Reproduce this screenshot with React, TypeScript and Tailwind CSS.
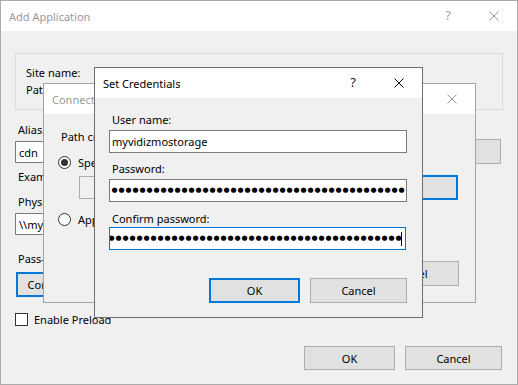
import React from "react";

const XIcon = ({ color }: { color: string }) => (
  <svg width="10" height="10" viewBox="0 0 10 10" className="block">
    <path d="M0.5 0.5 L9.5 9.5 M9.5 0.5 L0.5 9.5" stroke={color} strokeWidth="1" fill="none" />
  </svg>
);

function TitleBar({ title, active, help = true }: { title: string; active: boolean; help?: boolean }) {
  const c = active ? "#000000" : "#999999";
  return (
    <div className="h-[30px] bg-white flex items-center flex-none">
      <span className={active ? "pl-[8px] leading-[15px] text-black" : "pl-[8px] leading-[15px] text-[#999999]"}>{title}</span>
      <div className="ml-auto flex h-full">
        {help && (
          <div className={active ? "w-[46px] h-full flex items-center justify-center text-[13px] text-[#222222]" : "w-[46px] h-full flex items-center justify-center text-[13px] text-[#a6a6a6]"}>
            ?
          </div>
        )}
        <div className="w-[46px] h-full flex items-center justify-center">
          <XIcon color={c} />
        </div>
      </div>
    </div>
  );
}

function Radio({ checked = false }: { checked?: boolean }) {
  return (
    <div className="w-[13px] h-[13px] flex-none rounded-full border border-[#333333] bg-white flex items-center justify-center">
      {checked && <div className="w-[7px] h-[7px] rounded-full bg-[#333333]" />}
    </div>
  );
}

function Dots({ n }: { n: number }) {
  const arr = Array.from({ length: n });
  return (
    <>
      {arr.map((_, i) => (
        <span key={i} className="w-[7px] flex-none text-center font-['DejaVu_Sans',sans-serif] text-[7px] leading-none text-black">
          ●
        </span>
      ))}
    </>
  );
}

function Btn({ children, w, primary = false }: { children: React.ReactNode; w: string; primary?: boolean }) {
  return (
    <div
      className={
        primary
          ? `${w} flex-none h-full border-2 border-[#0078d7] bg-[#e1e1e1] flex items-center justify-center leading-none`
          : `${w} flex-none h-full border border-[#adadad] bg-[#e1e1e1] flex items-center justify-center leading-none`
      }
    >
      {children}
    </div>
  );
}

export default function App() {
  return (
    <div className="w-[518px] h-[385px] relative border border-[#aaaaaa] bg-[#f0f0f0] flex flex-col overflow-hidden font-['Noto_Sans',sans-serif] text-[11px] text-black">
      <TitleBar title="Add Application" active={false} />
      <div className="flex flex-col px-[14px] pt-[22px]">
        <div className="h-[57px] border border-[#dcdcdc] pl-[10px] pt-[10px] leading-[17px]">
          <div className="flex">
            <span className="w-[79px]">Site name:</span>
            <span>Default Web Site</span>
          </div>
          <div className="flex">
            <span className="w-[79px]">Path:</span>
            <span>/</span>
          </div>
        </div>

        <div className="mt-[12px] flex leading-[15px]">
          <div className="w-[215px] pl-[3px]">Alias:</div>
          <div className="pl-[3px]">Application pool:</div>
        </div>
        <div className="mt-[2px] h-[25px] flex items-start mr-[2px]">
          <div className="mt-[2px] w-[190px] h-[22px] border border-[#7a7a7a] bg-white flex items-center pl-[3px] leading-none">cdn</div>
          <div className="ml-[25px] mt-[2px] flex-1 h-[22px] border border-[#7a7a7a] bg-white flex items-center pl-[3px] leading-none">VidizmoPool</div>
          <div className="ml-[6px] h-[25px] w-[100px]">
            <Btn w="w-[100px]">Select...</Btn>
          </div>
        </div>

        <div className="mt-[5px] pl-[3px] leading-[15px]">Example: sales</div>
        <div className="mt-[10px] pl-[3px] leading-[15px]">Physical path:</div>
        <div className="mt-[4px] h-[22px] flex gap-[6px]">
          <div className="w-[420px] h-[22px] border border-[#7a7a7a] bg-white flex items-center pl-[3px] leading-none">\\myvidizmostorage.file.core.windows.net\cdn</div>
          <div className="w-[26px] h-[22px]">
            <Btn w="w-[26px]">...</Btn>
          </div>
        </div>

        <div className="mt-[16px] pl-[3px] leading-[15px]">Pass-through authentication</div>
        <div className="mt-[6px] ml-[1px] h-[25px] flex gap-[6px]">
          <Btn w="w-[89px]" primary>
            Connect as...
          </Btn>
          <Btn w="w-[100px]">Test Settings...</Btn>
        </div>

        <div className="mt-[16px] h-[13px] flex items-center gap-[6px]">
          <div className="w-[13px] h-[13px] flex-none border border-[#333333] bg-white" />
          <span className="leading-[13px]">Enable Preload</span>
        </div>

        <div className="mt-[20px] h-[24px] flex justify-end gap-[10px] mr-[1px]">
          <Btn w="w-[91px]">OK</Btn>
          <Btn w="w-[97px]">Cancel</Btn>
        </div>
      </div>

      {/* Connect As window */}
      <div className="absolute left-[42px] top-[82px] w-[433px] h-[220px] border border-[#a3a3a3] bg-[#f0f0f0] flex flex-col">
        <TitleBar title="Connect As" active={false} />
        <div className="flex flex-col pt-[15px]">
          <div className="pl-[17px] leading-[15px]">Path credentials:</div>
          <div className="mt-[11px] pl-[14px] h-[15px] flex items-center gap-[7px]">
            <Radio checked />
            <span className="leading-[15px]">Specific user:</span>
          </div>
          <div className="mt-[5px] pl-[35px] pr-[17px] h-[25px] flex items-center gap-[7px]">
            <div className="flex-1 h-[23px] border border-[#adadad] bg-[#f0f0f0]" />
            <Btn w="w-[100px]" primary>
              Set...
            </Btn>
          </div>
          <div className="mt-[12px] pl-[14px] h-[15px] flex items-center gap-[7px]">
            <Radio />
            <span className="leading-[15px]">Application user</span>
          </div>
          <div className="mt-[34px] h-[25px] flex justify-end gap-[10px] pr-[16px]">
            <Btn w="w-[91px]">OK</Btn>
            <Btn w="w-[97px]">Cancel</Btn>
          </div>
        </div>
      </div>

      {/* Set Credentials window */}
      <div className="absolute left-[93px] top-[66px] w-[329px] h-[251px] border border-[#6f6f6f] bg-[#f0f0f0] flex flex-col">
        <TitleBar title="Set Credentials" active />
        <div className="flex flex-col px-[14px] pt-[14px]">
          <div className="pl-[3px] leading-[15px] h-[15px]">User name:</div>
          <div className="mt-[3px] h-[23px] w-[298px] border border-[#7a7a7a] bg-white flex items-center pl-[2px] leading-none">myvidizmostorage</div>
          <div className="mt-[8px] pl-[3px] leading-[15px] h-[15px]">Password:</div>
          <div className="mt-[3px] h-[23px] w-[298px] border border-[#7a7a7a] bg-white flex items-center pl-[1px] overflow-hidden">
            <Dots n={42} />
          </div>
          <div className="mt-[9px] pl-[3px] leading-[15px] h-[15px]">Confirm password:</div>
          <div className="mt-[1px] h-[23px] w-[297px] border border-[#0078d7] bg-white flex items-center justify-end pr-[3px] overflow-hidden">
            <Dots n={46} />
            <span className="-ml-px w-[1px] h-[14px] flex-none bg-black" />
          </div>
          <div className="mt-[28px] h-[25px] flex justify-end gap-[10px] pr-[1px]">
            <Btn w="w-[91px]" primary>
              OK
            </Btn>
            <Btn w="w-[97px]">Cancel</Btn>
          </div>
        </div>
      </div>
    </div>
  );
}
